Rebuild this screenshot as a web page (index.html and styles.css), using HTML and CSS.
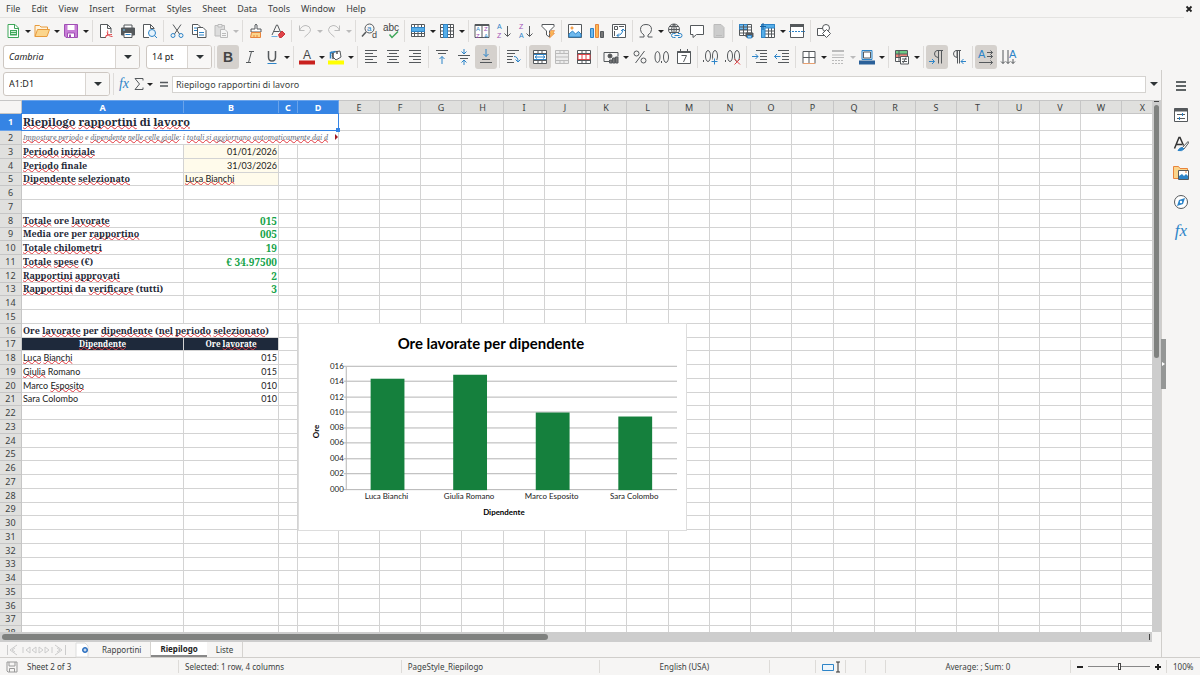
FILE: index.html
```html
<!DOCTYPE html>
<html lang="it">
<head>
<meta charset="utf-8">
<title>Riepilogo rapportini</title>
<link rel="stylesheet" href="styles.css">
</head>
<body>
<header class="menubar">
  <nav class="menus">
    <button>File</button><button>Edit</button><button>View</button><button>Insert</button><button>Format</button><button>Styles</button><button>Sheet</button><button>Data</button><button>Tools</button><button>Window</button><button>Help</button>
  </nav>
  <button class="close" aria-label="Close"><svg viewBox="0 0 8 8" width="8" height="8"><path d="M1.500 1.500l5 5M6.500 1.500l-5 5" stroke="#222" stroke-width="1.800"/></svg></button>
</header>

<div class="toolbar standard">
  <button class="tool" aria-label="New"><svg viewBox="0 0 16 16"><path d="M3 1.500h7l3.500 3.500v9.500h-10.500z" fill="#fff" stroke="#3fa75a"/><path d="M9.500 1.500v4h4" stroke="#3fa75a"/><path d="M5 7h7v5.500h-7z" fill="#3fa75a" stroke="none"/><path d="M6 8.500h5M6 10.500h5" stroke="#c8efd0"/></svg></button><button class="drop" aria-label="New menu"></button>
  <button class="tool" aria-label="Open"><svg viewBox="0 0 16 16"><path d="M1 13.500v-11h4.500l1.500 1.500h6.500v2.500" fill="#fff3dc" stroke="#e89b3c"/><path d="M1 13.500l2.500-7h12l-2.500 7z" fill="#fbd58c" stroke="#e89b3c"/></svg></button><button class="drop" aria-label="Open menu"></button>
  <button class="tool" aria-label="Save"><svg viewBox="0 0 16 16"><path d="M1.500 1.500h13v13h-11.500l-1.500-1.500z" fill="#c77dd6" stroke="#a04fb4"/><path d="M4.500 2h7v5h-7z" fill="#fff" stroke="none"/><path d="M4.500 10h7v4.500h-7z" fill="#fff" stroke="#a04fb4"/><path d="M6 11.500h2v3h-2z" fill="#a04fb4" stroke="none"/></svg></button><button class="drop" aria-label="Save menu"></button>
  <span class="sep"></span>
  <button class="tool" aria-label="Export as PDF"><svg viewBox="0 0 16 16"><path d="M8 14.500h-5.500v-13h7l3.500 3.500v5M9.500 1.500v4h3.500" fill="#fff"/><path d="M7 14.500c3-2 3-5 2.500-7M9 9.500c1 3 3 4 5.500 4M7.500 13c2-1 4-1.500 6.500-1.500" stroke="#e0454a"/></svg></button>
  <button class="tool" aria-label="Print"><svg viewBox="0 0 16 16"><path d="M4 5v-3h8v3" fill="#fff"/><path d="M1.500 5h13v7h-13z" fill="#55595c"/><path d="M4 9.500h8v5h-8z" fill="#fff" stroke="#55595c"/><path d="M5.500 11.500h5" stroke="#2d84c8"/><path d="M3 7h2" stroke="#6ec0f0"/></svg></button>
  <button class="tool" aria-label="Print preview"><svg viewBox="0 0 16 16"><path d="M7 14.500h-5.500v-13h7l3.500 3.500v1M8.500 1.500v4h3.500" fill="#fff"/><circle cx="10" cy="10" r="3.500" fill="#e6f3fc" stroke="#2d84c8"/><path d="M12.500 12.500l2.500 2.500" stroke="#2d84c8"/></svg></button>
  <span class="sep"></span>
  <button class="tool" aria-label="Cut"><svg viewBox="0 0 16 16"><path d="M4 1.500l6.500 9.500M12 1.500l-6.500 9.500"/><circle cx="4" cy="12.500" r="2" stroke="#2d84c8"/><circle cx="12" cy="12.500" r="2" stroke="#2d84c8"/></svg></button>
  <button class="tool" aria-label="Copy"><svg viewBox="0 0 16 16"><path d="M1.500 1.500h5.500l2.500 2.500v7.500h-8z" fill="#fff"/><path d="M6.500 4.500h5.500l3 3v7h-8.500z" fill="#fff"/><path d="M3 5h3M3 7.500h3M8 9.500h5M8 12h5" stroke="#2d84c8"/></svg></button>
  <button class="tool off" aria-label="Paste"><svg viewBox="0 0 16 16"><path d="M2 2.500h9.500v10.500h-9.500z" fill="#ddd"/><path d="M5 1.500h4v2.500h-4z" fill="#eee"/><path d="M7.500 6.500h4.500l2.500 2.500v5.500h-7z" fill="#f5f5f5"/><path d="M9 10.500h4M9 12.500h4"/></svg></button><button class="drop off" aria-label="Paste menu"></button>
  <span class="sep"></span>
  <button class="tool" aria-label="Clone formatting"><svg viewBox="0 0 16 16"><path d="M7 6v-4q1-1.500 2 0v4h4v3h-10v-3z" fill="#fff"/><path d="M3.500 9.500h9v5h-10z" fill="#fbd58c" stroke="#e8843c"/><path d="M6 14v-2M9 14v-2" stroke="#e8843c"/></svg></button>
  <button class="tool" aria-label="Clear formatting"><svg viewBox="0 0 16 16"><path d="M2 12l4.500-10h1l3 7M4 8.500h5.500"/><path d="M8.500 11.500l3.500-3.500 3 3-3.500 3.500h-2z" fill="#e0454a" stroke="#c9343a"/><path d="M1.500 13.500h6" stroke="#6eb1e4"/></svg></button>
  <span class="sep"></span>
  <button class="tool off" aria-label="Undo"><svg viewBox="0 0 16 16"><path d="M2.500 2.500v5h5M2.500 7.500q2-5 6.500-5 4 .5 4.500 4 0 2-2 4l-4 3.500"/></svg></button><button class="drop off" aria-label="Undo menu"></button>
  <button class="tool off" aria-label="Redo"><svg viewBox="0 0 16 16"><path d="M13.500 2.500v5h-5M13.500 7.500q-2-5-6.500-5-4 .5-4.500 4 0 2 2 4l4 3.500"/></svg></button><button class="drop off" aria-label="Redo menu"></button>
  <span class="sep"></span>
  <button class="tool" aria-label="Find and replace"><svg viewBox="0 0 16 16"><circle cx="8.500" cy="5.500" r="4.500"/><path d="M5 9l-4 4.500" stroke-width="1.500"/><text x="6" y="8" class="g blue" font-size="8">a</text><text x="11" y="15" class="g" font-size="9">d</text></svg></button>
  <button class="tool" aria-label="Spelling"><svg viewBox="0 0 16 16"><text x="0" y="8" class="g" font-size="10">abc</text><path d="M6.500 11.500l2.500 3 6-6" stroke="#3fa75a" stroke-width="1.500"/></svg></button>
  <span class="sep"></span>
  <button class="tool" aria-label="Row"><svg viewBox="0 0 16 16"><path d="M1.500 1.500h13v12h-13z" fill="#fff"/><path d="M4.500 1.500v12M8 1.500v12M11.500 1.500v12M1.500 10.500h13"/><path d="M1.500 4.500h13v4h-13z" fill="#56aee8" stroke="#2d84c8"/></svg></button><button class="drop" aria-label="Row menu"></button>
  <button class="tool" aria-label="Column"><svg viewBox="0 0 16 16"><path d="M1.500 1.500h13v13h-13z" fill="#fff"/><path d="M1.500 4.500h13M1.500 8h13M1.500 11.500h13M11.500 1.500v13"/><path d="M4.500 1.500h4v13h-4z" fill="#56aee8" stroke="#2d84c8"/></svg></button><button class="drop" aria-label="Column menu"></button>
  <span class="sep"></span>
  <button class="tool" aria-label="Sort"><svg viewBox="0 0 16 16"><path d="M1 1.500h14v13h-14z" fill="#fff"/><path d="M1 2h14" stroke-width="2"/><path d="M8 2v12"/><text x="2" y="8" class="g blue" font-size="6">A</text><text x="2" y="15" class="g purple" font-size="6">Z</text><text x="10" y="8" class="g purple" font-size="6">Z</text><text x="10" y="15" class="g blue" font-size="6">A</text></svg></button>
  <button class="tool" aria-label="Sort ascending"><svg viewBox="0 0 16 16"><text x="1" y="6" class="g blue" font-size="7">A</text><text x="1" y="15" class="g purple" font-size="7">Z</text><path d="M11.500 3v10M8.500 10.500l3 3 3-3"/></svg></button>
  <button class="tool" aria-label="Sort descending"><svg viewBox="0 0 16 16"><text x="1" y="6" class="g purple" font-size="7">Z</text><text x="1" y="15" class="g blue" font-size="7">A</text><path d="M11.500 3v10M8.500 10.500l3 3 3-3"/></svg></button>
  <button class="tool" aria-label="AutoFilter"><svg viewBox="0 0 16 16"><path d="M2 1.500h12v2l-4.500 4.500v6l-3-2v-4l-4.500-4.500z" fill="#fff"/><path d="M11 7.500h3.500l-1.500 3h1.500l-5 4.500 1.500-4h-1.500z" fill="#fbb856" stroke="#e8843c" stroke-width=".6"/></svg></button>
  <span class="sep"></span>
  <button class="tool" aria-label="Insert image"><svg viewBox="0 0 16 16"><path d="M1.500 1.500h13v13h-13z" fill="#fff"/><path d="M2 14v-3l3.500-3 3 3 3-2.500 2.500 2.500v3z" fill="#6eb9ee" stroke="#2d84c8"/><circle cx="5" cy="5" r="1.200" fill="#fbb856" stroke="#e8843c" stroke-width=".6"/></svg></button>
  <button class="tool" aria-label="Insert chart"><svg viewBox="0 0 16 16"><path d="M1.500 5.500h3v9h-3z" fill="#6eb9ee" stroke="#2d84c8"/><path d="M6.500 1.500h3v13h-3z" fill="#fbb856" stroke="#e8843c"/><path d="M11.500 8.500h3v6h-3z" fill="#777"/></svg></button>
  <button class="tool" aria-label="Pivot table"><svg viewBox="0 0 16 16"><path d="M1.500 1.500h13v13h-13z" fill="#fff"/><path d="M3.500 3.500h3v3h-3zM8 3.500h5M3.500 8v5"/><path d="M6 12.500q5 0 6-6M8 10.500l-2 2 2 2M10 8l2-2 2 2" stroke="#2d84c8"/></svg></button>
  <span class="sep"></span>
  <button class="tool" aria-label="Special character"><svg viewBox="0 0 16 16"><path d="M1.500 14h4.500v-2q-3.500-2-3.500-5.500 0-5 5.500-5t5.500 5q0 3.500-3.500 5.500v2h4.500"/></svg></button><button class="drop" aria-label="Special character menu"></button>
  <button class="tool" aria-label="Hyperlink"><svg viewBox="0 0 16 16"><circle cx="7" cy="6.500" r="5.500"/><path d="M1.500 6.500h11M7 1v11M2.500 3.500h9M2.500 9.500h9M7 1q-5 5.500 0 11M7 1q5 5.500 0 11"/><path d="M4 10h11v5h-11z" fill="#f6f5f4" stroke="none"/><path d="M8.500 10.500h-2a2 2 0 0 0 0 4h2M11 10.500h2a2 2 0 0 1 0 4h-2M7.500 12.500h5" stroke="#2d84c8"/></svg></button>
  <button class="tool" aria-label="Comment"><svg viewBox="0 0 16 16"><path d="M1.500 2.500h13v9h-7l-3.500 3v-3h-2.500z" fill="#fff"/></svg></button>
  <button class="tool off" aria-label="Headers and footers"><svg viewBox="0 0 16 16"><path d="M3 1.500h7l3 3v10h-10z" fill="#ccc"/><path d="M5 12.500h6"/></svg></button>
  <span class="sep"></span>
  <button class="tool" aria-label="Print area"><svg viewBox="0 0 16 16"><path d="M1.500 1.500h12v11h-12z" fill="#fff"/><path d="M1.500 1.500h8v5h-8z" fill="#6eb9ee" stroke="#2d84c8"/><path d="M5.500 1.500v11M9.500 1.500v11M1.500 4h12M1.500 7h12M1.500 10h12"/><path d="M8 10h7v4h-7z" fill="#55595c"/><path d="M9.500 12.500h4v2.500h-4z" fill="#9ed2f5" stroke="#2d84c8"/></svg></button>
  <button class="tool" aria-label="Freeze rows and columns"><svg viewBox="0 0 16 16"><path d="M1.500 1.500h13v13h-13z" fill="#fff"/><path d="M5 8h9.500M5 11h9.500M8.500 5v9.500M11.500 5v9.500"/><path d="M1.500 1.500h13v3.500h-9.500v9.500h-3.500z" fill="#56aee8" stroke="#2d84c8"/><path d="M3 0v7M0 3.500h6" stroke="#1b5f9c"/></svg></button><button class="drop" aria-label="Freeze menu"></button>
  <button class="tool" aria-label="Split window"><svg viewBox="0 0 16 16"><path d="M1.500 1.500h13v13h-13z" fill="#fff"/><path d="M1 2.500h14" stroke-width="3"/><path d="M0 8.500h16" stroke="#2d84c8" stroke-dasharray="2 1"/></svg></button>
  <span class="sep"></span>
  <button class="tool" aria-label="Draw functions"><svg viewBox="0 0 16 16"><path d="M1.500 5.500h7v7h-7z" fill="#fff"/><circle cx="10" cy="5" r="3.500" fill="#fff"/><path d="M10.500 6.500l4 4-4 4-4-4z" fill="#fff"/></svg></button>
</div>

<div class="toolbar formatting">
  <div class="combo font-name"><input type="text" value="Cambria" aria-label="Font name"><button aria-label="Font list"></button></div>
  <div class="combo font-size"><input type="text" value="14 pt" aria-label="Font size"><button aria-label="Size list"></button></div>
  <span class="sep"></span>
  <button class="tool on" aria-label="Bold"><svg viewBox="0 0 16 16"><text x="3" y="13" class="g bold" font-size="14">B</text></svg></button>
  <button class="tool" aria-label="Italic"><svg viewBox="0 0 16 16"><path d="M7 2.500h5M4 13.500h5M9.500 2.500l-3 11"/></svg></button>
  <button class="tool" aria-label="Underline"><svg viewBox="0 0 16 16"><path d="M4.500 2v6q0 4 3.500 4t3.500-4v-6" stroke-width="1.500"/><path d="M3.500 14.500h9" stroke="#2d84c8"/></svg></button><button class="drop" aria-label="Underline menu"></button>
  <span class="sep"></span>
  <button class="tool" aria-label="Font color"><svg viewBox="0 0 16 16"><text x="4" y="10" class="g" font-size="12">A</text><path d="M0 11.500h16v4h-16z" fill="#c9211e" stroke="none"/></svg></button><button class="drop" aria-label="Font color menu"></button>
  <button class="tool" aria-label="Highlighting"><svg viewBox="0 0 16 16"><path d="M6 3l6-1 1 6-5 3-4-4z" fill="#fff"/><path d="M5 10v-5l-2-2M9 2v3" stroke-width="1.500"/><path d="M2.500 9.500v-6l5-1" stroke="#2d84c8" stroke-width="1.500"/><path d="M0 11.500h16v4h-16z" fill="#ff0" stroke="none"/></svg></button><button class="drop" aria-label="Highlighting menu"></button>
  <span class="sep"></span>
  <button class="tool" aria-label="Align left"><svg viewBox="0 0 16 16"><path d="M2 1.500h12M2 4.500h8M2 7.500h12M2 10.500h8M2 13.500h12"/></svg></button>
  <button class="tool" aria-label="Center"><svg viewBox="0 0 16 16"><path d="M2 1.500h12M4 4.500h8M2 7.500h12M4 10.500h8M2 13.500h12"/></svg></button>
  <button class="tool" aria-label="Align right"><svg viewBox="0 0 16 16"><path d="M2 1.500h12M6 4.500h8M2 7.500h12M6 10.500h8M2 13.500h12"/></svg></button>
  <span class="sep"></span>
  <button class="tool" aria-label="Align top"><svg viewBox="0 0 16 16"><path d="M2 1.500h12M4 4.500h8"/><path d="M8 15v-7.500M5.500 10l2.500-2.500 2.500 2.500" stroke="#2d84c8"/></svg></button>
  <button class="tool" aria-label="Center vertically"><svg viewBox="0 0 16 16"><path d="M2 6.500h12M4 9.500h8"/><path d="M8 0v5M5.500 2.500l2.500 2.500 2.500-2.500M8 16v-5M5.500 13.500l2.500-2.500 2.500 2.500" stroke="#2d84c8"/></svg></button>
  <button class="tool on" aria-label="Align bottom"><svg viewBox="0 0 16 16"><path d="M2 13.500h12M4 10.500h8"/><path d="M8 0v7.500M5.500 5l2.500 2.500 2.500-2.500" stroke="#2d84c8"/></svg></button>
  <span class="sep"></span>
  <button class="tool" aria-label="Wrap text"><svg viewBox="0 0 16 16"><path d="M2 1.500h12M2 4.500h8M2 7.500h6M2 10.500h5M2 13.500h7"/><path d="M9 7.500q4 0 4 5M10.500 10.500l2.500 2.500 2.500-2.500" stroke="#2d84c8"/></svg></button>
  <span class="sep"></span>
  <button class="tool on" aria-label="Merge and center"><svg viewBox="0 0 16 16"><path d="M1.500 1.500h13v13h-13z" fill="#fff"/><path d="M1.500 4.500h13M1.500 11.500h13M6 1.500v3M10 1.500v3M6 11.500v3M10 11.500v3"/><path d="M2 5.500h12M2 10.500h12M3 8h10M5 6.500l-2 1.500 2 1.500M11 6.500l2 1.500-2 1.500" stroke="#2d84c8"/></svg></button>
  <button class="tool off" aria-label="Merge cells"><svg viewBox="0 0 16 16"><path d="M1.500 1.500h13v13h-13z" fill="#ececec"/><path d="M1.500 4.500h13M1.500 11.500h13M6 1.500v3M10 1.500v3M6 11.500v3M10 11.500v3M1.500 8h13"/></svg></button>
  <button class="tool" aria-label="Unmerge cells"><svg viewBox="0 0 16 16"><path d="M1.500 1.500h13v13h-13z" fill="#fff"/><path d="M1.500 4.500h13M1.500 11.500h13M6 1.500v3M10 1.500v3M6 11.500v3M10 11.500v3"/><path d="M2 5.500h12M2 10.500h12M2 5.500v5M6 5.500v5M10 5.500v5M14 5.500v5" stroke="#e0454a"/></svg></button>
  <span class="sep"></span>
  <button class="tool" aria-label="Currency"><svg viewBox="0 0 16 16"><path d="M1 12.500v-9h14v4M1 12.500h5"/><circle cx="7" cy="7" r="2" fill="#555"/><path d="M6.500 14v-3h2.500v3zM9.500 14v-5h2.500v5zM12.500 14v-6h2.500v6z" fill="#777"/></svg></button><button class="drop" aria-label="Currency menu"></button>
  <button class="tool" aria-label="Percent"><svg viewBox="0 0 16 16"><circle cx="4.500" cy="4.500" r="2.500"/><circle cx="11.500" cy="11.500" r="2.500"/><path d="M12.500 2l-9 12"/></svg></button>
  <button class="tool" aria-label="Number"><svg viewBox="0 0 16 16"><ellipse cx="3.500" cy="8" rx="2.500" ry="5.500"/><ellipse cx="12" cy="8" rx="2.500" ry="5.500"/><path d="M7.500 12v2"/></svg></button>
  <button class="tool" aria-label="Date"><svg viewBox="0 0 16 16"><path d="M1.500 2.500h13v12h-13z" fill="#fff"/><path d="M1.500 3h13" stroke-width="2"/><path d="M4.500 0v2M11.500 0v2"/><path d="M5.500 6.500h5l-3 6.500"/></svg></button>
  <span class="sep"></span>
  <button class="tool" aria-label="Add decimal"><svg viewBox="0 0 16 16"><ellipse cx="5" cy="7" rx="2.500" ry="5.500"/><ellipse cx="12" cy="7" rx="2.500" ry="5.500"/><path d="M.5 11v2"/><path d="M8 12.500h7M11.500 9v7" stroke="#f6f5f4" stroke-width="3"/><path d="M8.500 12.500h6M11.500 9.500v6" stroke="#2d84c8"/></svg></button>
  <button class="tool" aria-label="Delete decimal"><svg viewBox="0 0 16 16"><ellipse cx="5" cy="7" rx="2.500" ry="5.500"/><ellipse cx="12" cy="7" rx="2.500" ry="5.500"/><path d="M.5 11v2"/><path d="M9.500 10l5.500 5.500M15 10l-5.500 5.500" stroke="#e0454a"/></svg></button>
  <span class="sep"></span>
  <button class="tool" aria-label="Increase indent"><svg viewBox="0 0 16 16"><path d="M4 1.500h11M8 4.500h7M8 7.500h7M8 10.500h7M4 13.500h11"/><path d="M0 7.500h6M3.500 5l2.500 2.500-2.500 2.500" stroke="#2d84c8"/></svg></button>
  <button class="tool" aria-label="Decrease indent"><svg viewBox="0 0 16 16"><path d="M4 1.500h11M8 4.500h7M8 7.500h7M8 10.500h7M4 13.500h11"/><path d="M.5 7.500h6M3 5l-2.500 2.500 2.500 2.500" stroke="#2d84c8"/></svg></button>
  <span class="sep"></span>
  <button class="tool" aria-label="Borders"><svg viewBox="0 0 16 16"><path d="M2 2.500h12v12h-12z" fill="#fff"/><path d="M8 2.500v12M2 8.500h12"/><path d="M2 14.500h12" stroke="#e8a070"/></svg></button><button class="drop" aria-label="Borders menu"></button>
  <button class="tool off" aria-label="Border style"><svg viewBox="0 0 16 16"><path d="M2 2h12" stroke-width="2"/><path d="M2 6h12M2 8.500h12"/><path d="M2 11.500h12M2 14.500h12" stroke-dasharray="2 1"/></svg></button><button class="drop off" aria-label="Border style menu"></button>
  <button class="tool" aria-label="Background color"><svg viewBox="0 0 16 16"><path d="M3 1.500h10v9h-10z" fill="#d6ebfa" stroke="#2d84c8"/><path d="M4.500 3h7v6h-7z" fill="#fff"/><path d="M0 11.500h16v4h-16z" fill="#2a6099" stroke="none"/></svg></button><button class="drop" aria-label="Background color menu"></button>
  <span class="sep"></span>
  <button class="tool" aria-label="Conditional formatting"><svg viewBox="0 0 16 16"><path d="M1.500 1.500h12v11h-12z" fill="#fff"/><path d="M2 2h11v3h-11z" fill="#6ecb86" stroke="none"/><path d="M2 5h11v3h-11z" fill="#f0857a" stroke="none"/><path d="M1.500 5h12M1.500 8.500h12M5 1.500v11"/><path d="M6.500 7.500h8v7.500h-8z" fill="#fff"/><path d="M8 10h5M8 12.500h5M12 8.500l-3 5.500"/></svg></button><button class="drop" aria-label="Conditional menu"></button>
  <span class="sep"></span>
  <button class="tool on" aria-label="Left to right"><svg viewBox="0 0 16 16"><path d="M14 1.500h-6q-2.500.5-2.500 3.500t3.500 3.500M9.500 1.500v13M12.500 1.500v13"/><path d="M0 12.500h5.500M3 10l2.500 2.500-2.500 2.500" stroke="#2d84c8"/></svg></button>
  <button class="tool" aria-label="Right to left"><svg viewBox="0 0 16 16"><path d="M10 1.500h-5q-2.500.5-2.500 3.500t3.500 3.500v-7h2M6.500 1.500v13M8.500 1.500v13"/><path d="M15 12.500h-5M12.500 10l-2.500 2.500 2.500 2.500" stroke="#2d84c8"/></svg></button>
  <span class="sep"></span>
  <button class="tool on" aria-label="Text direction horizontal"><svg viewBox="0 0 16 16"><text x="0" y="9" class="g blue" font-size="11">A</text><path d="M9 3.500h5.500M9 7.500h5.500M1 13.500h13.500M12.500 1.500l2 2-2 2M12.500 5.500l2 2-2 2M12.500 11.500l2 2-2 2"/></svg></button>
  <button class="tool" aria-label="Text direction vertical"><svg viewBox="0 0 16 16"><text x="9" y="9" class="g blue" font-size="11">A</text><path d="M3 1v13.500M8 1v13.500M13 10v4.500M1 12.500l2 2 2-2M6 12.500l2 2 2-2M11 12.500l2 2 2-2"/></svg></button>
</div>

<main class="workspace">
  <section class="document">
    <div class="formulabar">
      <div class="combo name-box"><input type="text" value="A1:D1" aria-label="Name box"><button aria-label="Name list"></button></div>
      <span class="sep"></span>
      <button class="formula-tool fx" aria-label="Function wizard">fx</button>
      <button class="formula-tool" aria-label="Sum"><svg viewBox="0 0 12 14" width="12" height="14"><path d="M10 3.500v-2h-8l4.500 5.500-4.500 5.500h8v-2"/></svg></button>
      <button class="drop" aria-label="Sum menu"></button>
      <button class="formula-tool equals" aria-label="Formula"><svg viewBox="0 0 12 14" width="12" height="14"><path d="M2 5.500h8M2 9h8" stroke-width="1.500"/></svg></button>
      <input class="formula" type="text" value="Riepilogo rapportini di lavoro" aria-label="Input line">
      <button class="expand" aria-label="Expand formula bar"></button>
    </div>
    <div class="sheet">
      <div class="viewport">
        <table class="grid" id="grid"></table>
        <figure class="chart">
          <svg id="chart" viewBox="0 0 389 208" role="img" aria-label="Ore lavorate per dipendente"></svg>
        </figure>
      </div>
      <div class="vscroll"><div class="thumb"></div></div>
      <div class="hscroll"><div class="thumb"></div></div>
    </div>
    <div class="tabs">
      <svg class="tabnav" viewBox="0 0 62 14" width="62" height="14"><path d="M1.500 2v10M11 2l-7 5 7 5M9 5l-3 2 3 2M17 4v6M24 4l-4 3 4 3zM30 4l-4 3 4 3zM33 4l4 3-4 3zM39 4l4 3-4 3zM46 4v6M49 2l7 5-7 5M51 5l3 2-3 2M59.500 2v10"/></svg>
      <button class="addtab" aria-label="Add sheet"><svg viewBox="0 0 14 14" width="14" height="14"><path d="M1 0h9l3 3v11h-12z" fill="#fff"/><circle cx="10" cy="7" r="2.500" fill="#2a6fc0" stroke="#2a6fc0"/><path d="M8.500 7h3M10 5.500v3" stroke="#fff"/></svg></button>
      <button class="tab">Rapportini</button>
      <button class="tab current">Riepilogo</button>
      <button class="tab">Liste</button>
    </div>
  </section>
  <aside class="sidebar">
    <button aria-label="Sidebar settings"><svg viewBox="0 0 16 16"><path d="M3 4h10M3 8h10M3 12h10" stroke="#2e3436" stroke-width="1.500"/></svg></button>
    <button aria-label="Properties"><svg viewBox="0 0 16 16"><path d="M1.500 1.500h13v13h-13z" fill="#fff"/><path d="M1.500 3h13" stroke-width="3"/><path d="M4 7.500h8M4 11.500h8" /><path d="M9.500 6v3M6.500 10v3" stroke="#2d84c8"/></svg></button>
    <button aria-label="Styles"><svg viewBox="0 0 16 16"><path d="M1.500 12.500l4.500-11h1l3.500 8M3.500 8.500h5.500" stroke="#333" stroke-width="1.500"/><path d="M15 5.500l-5.500 6 1.500 1.500 4.500-6z" fill="#fff"/><path d="M9 11.500q-2.500 0-4 3 4 1 6-1.500z" fill="#2d84c8" stroke="#2d84c8"/></svg></button>
    <button aria-label="Gallery"><svg viewBox="0 0 16 16"><path d="M.5 13.500v-12h5l1.500 2h7.500v10z" fill="#fbd58c" stroke="#e8843c"/><path d="M5.500 5.500h10v9h-10z" fill="#fff"/><path d="M6 14v-3l3-2 2 2 2-2 2 2v3z" fill="#2d84c8" stroke="none"/><path d="M12 7h2" stroke="#e8843c"/></svg></button>
    <button aria-label="Navigator"><svg viewBox="0 0 16 16"><circle cx="8" cy="8" r="6.500" fill="#fff"/><path d="M12 4l-2 6-6 2 2-6z" fill="#2d84c8" stroke="none"/><circle cx="8" cy="8" r="1.200" fill="#fff" stroke="none"/></svg></button>
    <button class="fx" aria-label="Functions">fx</button>
    <span class="grip"></span>
  </aside>
</main>

<footer class="statusbar">
  <span class="cell save"><svg viewBox="0 0 12 12" width="12" height="12"><path d="M1 1h10v10h-9l-1-1zM3 1v4h6v-4M3.500 11v-3.500h5v3.500"/></svg></span>
  <span class="cell pages">Sheet 2 of 3</span>
  <span class="cell selection">Selected: 1 row, 4 columns</span>
  <span class="cell style">PageStyle_Riepilogo</span>
  <span class="cell language">English (USA)</span>
  <span class="cell insert"></span>
  <span class="cell mode"><svg viewBox="0 0 20 12" width="20" height="12"><path d="M1.500 3.500h11v6h-11z" stroke="#2d84c8" fill="#eef6fc"/><path d="M15 1h4M17 1v10M15 11h4" stroke="#333"/></svg></span>
  <span class="cell blank"></span>
  <span class="cell blank"></span>
  <span class="cell sum">Average: ; Sum: 0</span>
  <span class="cell zoom"><button aria-label="Zoom out"><svg viewBox="0 0 8 8" width="8" height="8"><path d="M1 4h6"/></svg></button><input type="range" min="0" max="100" value="50" aria-label="Zoom"><button aria-label="Zoom in"><svg viewBox="0 0 8 8" width="8" height="8"><path d="M1 4h6M4 1v6"/></svg></button></span>
  <span class="cell percent">100%</span>
</footer>
<script src="app.js"></script>
</body>
</html>
```

FILE: styles.css
```css
* { box-sizing: border-box; }

body {
  margin: 0;
  height: 100vh;
  display: flex;
  flex-direction: column;
  overflow: hidden;
  background: #f6f5f4;
  color: #3b3f41;
  font: 9px/12px "Noto Sans", sans-serif;
}

button, input {
  margin: 0;
  padding: 0;
  border: 0;
  background: none;
  color: inherit;
  font: inherit;
}

svg { display: block; fill: none; stroke: #55595c; overflow: visible; }
svg text { stroke: none; }

.g { fill: #444; font-family: "Liberation Sans", sans-serif; }
.g.blue { fill: #2d84c8; }
.g.purple { fill: #a04fb4; }
.g.bold { font-weight: 700; }

/* Menu bar */
.menubar {
  display: flex;
  justify-content: space-between;
  align-items: center;
  height: 17px;
  margin-right: 7px;
}
.menus { display: flex; gap: 11px; padding-left: 6px; }

/* Toolbars */
.toolbar {
  display: flex;
  align-items: center;
  flex: none;
  padding-left: 2px;
}
.standard { height: 27px; border-top: 1px solid #e4e3e1; margin-right: 16px; }
.formatting { height: 26px; }
.tool {
  flex: none;
  display: grid;
  place-items: center;
  width: 22px;
  height: 24px;
  border-radius: 3px;
}
.tool svg, .sidebar svg { width: 16px; height: 16px; }
.tool.on { background: #d5d1cd; }
.tool.off svg { stroke: #bbb; }
.drop { flex: none; display: grid; place-items: center; width: 7px; height: 24px; }
.drop::before {
  content: "";
  border: solid transparent;
  border-width: 3px 3px 0;
  border-top-color: #222;
}
.drop.off::before { border-top-color: #bbb; }
.sep {
  flex: none;
  width: 5px;
  height: 22px;
  background: linear-gradient(#dedcda, #dedcda) center / 1px 100% no-repeat;
}
.drop + .sep { margin-left: 1px; }

.combo {
  display: flex;
  height: 24px;
  border: 1px solid #cdc7c2;
  border-radius: 3px;
  background: #fff;
  overflow: hidden;
}
.combo input { flex: 1; min-width: 0; padding-left: 5px; color: #222; }
.combo button {
  display: grid;
  place-items: center;
  width: 24px;
  border-left: 1px solid #d9d5d1;
  background: #f8f7f6;
}
.combo button::before, .expand::before {
  content: "";
  border: solid transparent;
  border-width: 4px 4px 0;
  border-top-color: #2e3436;
}
.font-name { width: 137px; margin: 0 6px 0 1px; }
.font-name input { font-style: italic; }
.font-size { width: 66px; }

/* Document */
.workspace { flex: 1; min-height: 0; display: flex; }
.document { flex: 1; min-width: 0; display: flex; flex-direction: column; }
.formulabar { display: flex; align-items: center; flex: none; height: 30px; padding: 0 0 2px 2px; }
.name-box { width: 107px; margin-left: 1px; }
.formulabar .sep { width: 6px; }
.formula-tool { display: grid; place-items: center; width: 14px; height: 20px; }
.equals { margin-left: 4px; }
.fx { color: #2d84c8; font: italic 14px/14px "Liberation Serif", serif; }
.formula {
  flex: 1;
  min-width: 0;
  height: 17px;
  margin-left: 1px;
  padding-left: 3px;
  border: 1px solid #d5d3d0;
  background: #fff;
}
.expand { width: 15px; height: 20px; display: grid; place-items: center; }
.formulabar .fx { width: 16px; }

.sheet {
  flex: 1;
  min-height: 0;
  display: grid;
  grid-template: minmax(0, 1fr) 10px / minmax(0, 1fr) 9px;
}
.viewport { position: relative; overflow: hidden; background: #fff; }

.grid { width: 0; table-layout: fixed; border-collapse: separate; border-spacing: 0; }
.grid th, .grid td {
  padding: 0 1px;
  border: solid #d3d3d3;
  border-width: 0 1px 1px 0;
  overflow: hidden;
  white-space: nowrap;
}
.grid th {
  background: #e0e0de;
  border-color: #c6c6c6;
  text-align: center;
  font: 9px/12px "Noto Sans", sans-serif;
}
.grid thead th { height: 14px; border-top: 1px solid #c6c6c6; line-height: 11px; }
.grid th.picked { background: #3584e4; color: #fff; font-weight: 700; border-color: #6aa3ea; }
.grid thead th.corner { background: #f6f5f4; }
.grid tbody tr { height: 14px; }
.grid tbody tr:nth-child(4n+5) { height: 13px; }
.grid tbody tr:first-child { height: 17px; }
.grid td { color: #222; font: 9px/12px Lato, sans-serif; }
.grid td.serif { color: #1f2937; font: 700 9px/12px "Noto Serif", "DejaVu Serif Condensed", "DejaVu Serif", serif; }
.grid td.title { font-size: 11px; }
.grid td.note { position: relative; color: #6b7280; font-weight: 400; font-style: italic; font-size: 7px; }
.grid td.note::after {
  content: "";
  position: absolute;
  right: 0;
  top: 3px;
  border: solid transparent;
  border-width: 3px 0 3px 3px;
  border-left-color: #a01820;
}
.grid td.input { background: #fffbeb; }
.grid td.right { text-align: right; }
.grid td.total { color: #16a34a; font-size: 10px; }
.grid td.head { background: #1e293b; color: #fff; text-align: center; font-size: 8px; }
.grid u {
  text-decoration: underline wavy #e2383f;
  text-decoration-thickness: 1px;
  text-underline-offset: -1px;
  text-decoration-skip-ink: none;
}
.selection-frame {
  position: absolute;
  left: 21px;
  top: 13px;
  width: 318px;
  height: 18px;
  border: 1px solid #3584e4;
}
.selection-frame::after {
  content: "";
  position: absolute;
  right: -2px;
  bottom: -2px;
  width: 4px;
  height: 4px;
  background: #3584e4;
}

.chart {
  position: absolute;
  left: 298px;
  top: 223px;
  width: 389px;
  height: 208px;
  margin: 0;
  border: 1px solid #ddd;
  background: #fff;
}
.chart text { fill: #222; font: 8px Lato, sans-serif; }
.chart .middle { text-anchor: middle; }
.chart .end { text-anchor: end; }
.chart .strong { fill: #000; font-weight: 700; }
.chart .heading { fill: #000; font-size: 15px; font-weight: 700; }

.vscroll { background: #cdcdcd; padding: 4px 2px 0; }
.vscroll::before { content: ""; display: block; height: 1px; margin-top: -3px; margin-bottom: 3px; background: #444; }
.vscroll .thumb { height: 48%; border-radius: 3px; background: #7f817f; }
.hscroll { position: relative; background: #cdcdcd; padding: 2px 0 2px 2px; }
.hscroll::after { content: ""; position: absolute; right: 2px; top: 2px; width: 1px; height: 6px; background: #444; }
.hscroll .thumb { width: 546px; max-width: 90%; height: 6px; border-radius: 3px; background: #7f817f; }

.tabs { flex: none; display: flex; height: 16px; padding-left: 6px; border-bottom: 1px solid #d0cecb; font-size: 8px; }
.tabnav { flex: none; stroke: #ccc; margin-top: 1px; }
.addtab { margin: 0 4px 0 7px; }
.addtab svg { stroke: #ddd; }
.tab { padding: 0 9px; border-right: 1px solid #d5d3d0; }
.tab.current { background: #fff; border-right: 0; border-bottom: 2px solid #888; font-weight: 700; color: #222; }

/* Sidebar */
.sidebar {
  position: relative;
  flex: none;
  width: 39px;
  display: flex;
  flex-direction: column;
  align-items: center;
  gap: 5px;
  padding-top: 4px;
  border-left: 1px solid #d0cecb;
  border-bottom: 1px solid #d0cecb;
}
.sidebar button { display: grid; place-items: center; width: 24px; height: 24px; }
.sidebar .fx { font-size: 17px; }
.grip { position: absolute; left: -1px; top: 269px; width: 5px; height: 50px; background: #959796; }
.grip::before {
  content: "";
  position: absolute;
  left: 1px;
  top: 23px;
  border: solid transparent;
  border-width: 2px 0 2px 3px;
  border-left-color: #fff;
}

/* Status bar */
.statusbar { flex: none; display: flex; align-items: center; height: 17px; font-size: 8px; }
.cell {
  display: flex;
  align-items: center;
  height: 13px;
  border-right: 1px solid #dddbd8;
  white-space: nowrap;
}
.cell.save { width: 22px; padding-left: 6px; border: 0; }
.save svg { stroke: #999; }
.pages { flex: 154; padding-left: 5px; }
.selection { flex: 220; padding-left: 6px; }
.style { flex: 195; padding-left: 6px; }
.language { flex: 172; justify-content: center; }
.insert { width: 46px; }
.mode { width: 30px; padding-left: 5px; }
.blank { width: 20px; }
.sum { flex: 188; justify-content: center; }
.zoom { width: 96px; padding: 0 4px 0 5px; }
.zoom svg { stroke: #222; stroke-width: 2; }
.zoom input {
  flex: 1;
  min-width: 0;
  height: 12px;
  margin: 0 4px;
  appearance: none;
  background: linear-gradient(#888, #888) center / 100% 1px no-repeat;
}
.zoom input::-webkit-slider-thumb {
  appearance: none;
  width: 3px;
  height: 7px;
  border: 1px solid #444;
  background: #fff;
}
.percent { width: 33px; padding-left: 6px; border: 0; }
```

FILE: app.js
```js
const LAST_ROW = 38;
const columns = [..."ABCDEFGHIJKLMNOPQRSTUVWX"];
const fixedWidths = { A: 162, B: 95, C: 19, D: 41 };

// Cell contents: words wrapped in <u> are flagged by the spelling checker.
const cells = {
  A1: ["serif title", "<u>Riepilogo</u> <u>rapportini</u> di <u>lavoro</u>", 4],
  A2: ["serif note", "<u>Impostare periodo</u> e <u>dipendente nelle celle gialle</u>: i <u>totali si aggiornano automaticamente dai d</u>", 4],
  A3: ["serif", "<u>Periodo</u> <u>iniziale</u>"],
  B3: ["input right", "01/01/2026"],
  A4: ["serif", "<u>Periodo</u> finale"],
  B4: ["input right", "31/03/2026"],
  A5: ["serif", "<u>Dipendente</u> <u>selezionato</u>"],
  B5: ["input", "<u>Luca Bianchi</u>"],
  A8: ["serif", "<u>Totale</u> ore <u>lavorate</u>"],
  B8: ["serif total right", "015"],
  A9: ["serif", "Media ore per <u>rapportino</u>"],
  B9: ["serif total right", "005"],
  A10: ["serif", "<u>Totale</u> <u>chilometri</u>"],
  B10: ["serif total right", "19"],
  A11: ["serif", "<u>Totale</u> <u>spese</u> (€)"],
  B11: ["serif total right", "€ 34.97500"],
  A12: ["serif", "<u>Rapportini</u> <u>approvati</u>"],
  B12: ["serif total right", "2"],
  A13: ["serif", "<u>Rapportini</u> da <u>verificare</u> (tutti)"],
  B13: ["serif total right", "3"],
  A16: ["serif", "Ore <u>lavorate</u> per <u>dipendente</u> (<u>nel</u> <u>periodo</u> <u>selezionato</u>)", 2],
  A17: ["serif head", "<u>Dipendente</u>"],
  B17: ["serif head", "Ore <u>lavorate</u>"],
  A18: ["", "<u>Luca</u> <u>Bianchi</u>"],
  B18: ["right", "015"],
  A19: ["", "<u>Giulia</u> Romano"],
  B19: ["right", "015"],
  A20: ["", "Marco <u>Esposito</u>"],
  B20: ["right", "010"],
  A21: ["", "Sara Colombo"],
  B21: ["right", "010"],
};

const widthOf = (name, i) => fixedWidths[name] || (i % 4 === 3 ? 42 : 41);

let html = '<colgroup><col style="width:22px">';
columns.forEach((name, i) => { html += `<col style="width:${widthOf(name, i)}px">`; });
html += '</colgroup><thead><tr><th class="corner"></th>';
columns.forEach((name, i) => { html += `<th scope="col" class="${i < 4 ? "picked" : ""}">${name}</th>`; });
html += "</tr></thead><tbody>";
for (let row = 1; row <= LAST_ROW; row++) {
  html += `<tr><th scope="row" class="${row === 1 ? "picked" : ""}">${row}</th>`;
  for (let i = 0; i < columns.length; i++) {
    const [cls, text, span = 1] = cells[columns[i] + row] || ["", ""];
    html += `<td class="${cls}" colspan="${span}">${text}</td>`;
    i += span - 1;
  }
  html += "</tr>";
}
document.getElementById("grid").innerHTML = html + "</tbody>";
const frame = document.createElement("div");
frame.className = "selection-frame";
document.querySelector(".viewport").append(frame);

// Bar chart
const hours = [["Luca Bianchi", 14.5], ["Giulia Romano", 15], ["Marco Esposito", 10], ["Sara Colombo", 9.5]];
const plot = { left: 47, right: 380, top: 43, bottom: 167, max: 16 };
const y = (v) => plot.bottom - Math.round((v / plot.max) * (plot.bottom - plot.top));
let chart = '<text class="middle heading" x="193" y="25">Ore lavorate per dipendente</text>';
for (let v = 0; v <= plot.max; v += 2) {
  chart += `<path stroke="#b3b3b3" d="M${plot.left - 2} ${y(v) - 0.5}H${plot.right}"/>`;
  chart += `<text class="end" x="45" y="${y(v) + 2}">${String(v).padStart(3, "0")}</text>`;
}
chart += `<path stroke="#b3b3b3" d="M${plot.left + 0.5} ${plot.top}V${plot.bottom}"/>`;
const step = (plot.right - plot.left) / hours.length;
hours.forEach(([name, value], i) => {
  const center = Math.round(plot.left + step * (i + 0.5));
  chart += `<rect x="${center - 17}" y="${y(value)}" width="34" height="${plot.bottom - y(value)}" fill="#15803d" stroke="none"/>`;
  chart += `<text class="middle" x="${center - 1}" y="176">${name}</text>`;
});
chart += '<text class="middle strong" x="206" y="192">Dipendente</text>';
chart += '<text class="middle strong" transform="translate(20 108) rotate(-90)">Ore</text>';
document.getElementById("chart").innerHTML = chart;
```
